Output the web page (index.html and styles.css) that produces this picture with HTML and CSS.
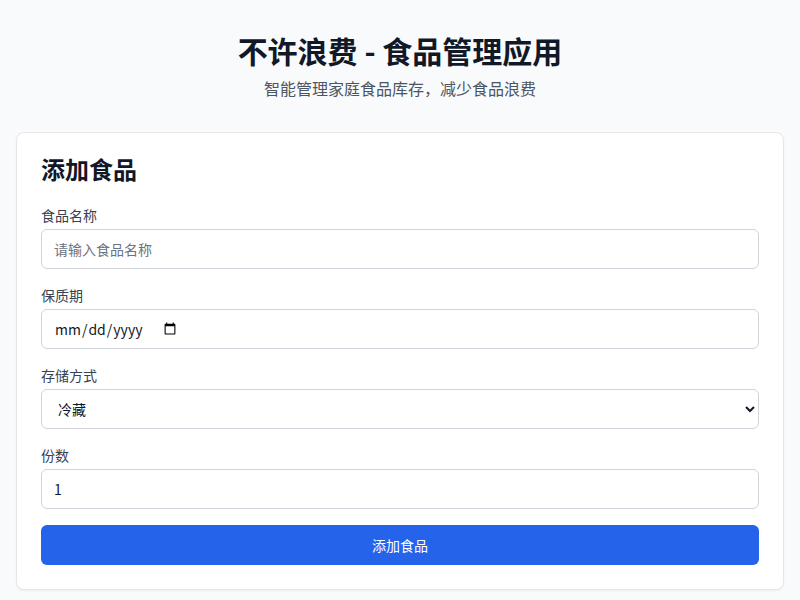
FILE: index.html
```html
<!DOCTYPE html>
<html lang="zh-CN">
<head>
    <meta charset="UTF-8">
    <meta name="viewport" content="width=device-width, initial-scale=1.0">
    <title>不许浪费 - 食品管理应用</title>
    <link rel="stylesheet" href="styles.css">
</head>
<body>
    <div class="container">
        <!-- Header -->
        <header class="header">
            <h1>不许浪费 - 食品管理应用</h1>
            <p>智能管理家庭食品库存，减少食品浪费</p>
        </header>

        <!-- Add Food -->
        <section class="card" id="add-food">
            <h2>添加食品</h2>
            <form id="food-form">
                <div class="field">
                    <label for="food-name">食品名称</label>
                    <input type="text" id="food-name" placeholder="请输入食品名称">
                </div>
                <div class="field">
                    <label for="expiry">保质期</label>
                    <input type="date" id="expiry">
                </div>
                <div class="field">
                    <label for="storage">存储方式</label>
                    <select id="storage">
                        <option value="fridge">冷藏</option>
                        <option value="freezer">冷冻</option>
                        <option value="room">常温</option>
                    </select>
                </div>
                <div class="field">
                    <label for="portions">份数</label>
                    <input type="number" id="portions" value="1" min="1">
                </div>
                <button type="submit">添加食品</button>
            </form>
        </section>
    </div>
</body>
</html>
```

FILE: styles.css
```css
/* Base Styles */
* {
    box-sizing: border-box;
}

body {
    font-family: "Noto Sans CJK SC", "Noto Sans", sans-serif;
    background-color: #f9fafb;
    color: #111827;
    margin: 0;
    padding: 0;
}

.container {
    padding: 32px 16px;
}

/* Header */
.header {
    text-align: center;
    margin-bottom: 32px;
}

.header h1 {
    font-size: 30px;
    line-height: 36px;
    font-weight: bold;
    color: #111827;
    margin: 0 0 8px;
}

.header p {
    font-size: 16px;
    line-height: 24px;
    color: #4b5563;
    margin: 0;
}

/* Card */
.card {
    background-color: #fff;
    border: 1px solid #e5e7eb;
    border-radius: 8px;
    box-shadow: 0 1px 2px rgba(0, 0, 0, 0.05);
    padding: 24px;
}

.card h2 {
    font-size: 24px;
    line-height: 24px;
    font-weight: bold;
    margin: 0 0 24px;
}

/* Forms */
.field {
    margin-bottom: 16px;
}

label {
    display: block;
    font-size: 14px;
    line-height: 20px;
    color: #374151;
    margin-bottom: 4px;
}

input, select {
    display: block;
    width: 100%;
    height: 40px;
    padding: 8px 12px;
    font-family: inherit;
    font-size: 14px;
    color: #111827;
    background-color: #fff;
    border: 1px solid #d1d5db;
    border-radius: 6px;
}

input::placeholder {
    color: #6b7280;
}

/* keep the calendar icon next to the date text */
input[type="date"]::-webkit-datetime-edit {
    flex: none;
}

input[type="date"]::-webkit-calendar-picker-indicator {
    margin-left: 0;
}

input:focus, select:focus {
    border-color: #2563eb;
    outline: none;
}

button {
    display: block;
    width: 100%;
    height: 40px;
    font-family: inherit;
    font-size: 14px;
    color: #fff;
    background-color: #2563eb;
    border: none;
    border-radius: 6px;
    cursor: pointer;
}

button:hover {
    background-color: #1d4ed8;
}
```
